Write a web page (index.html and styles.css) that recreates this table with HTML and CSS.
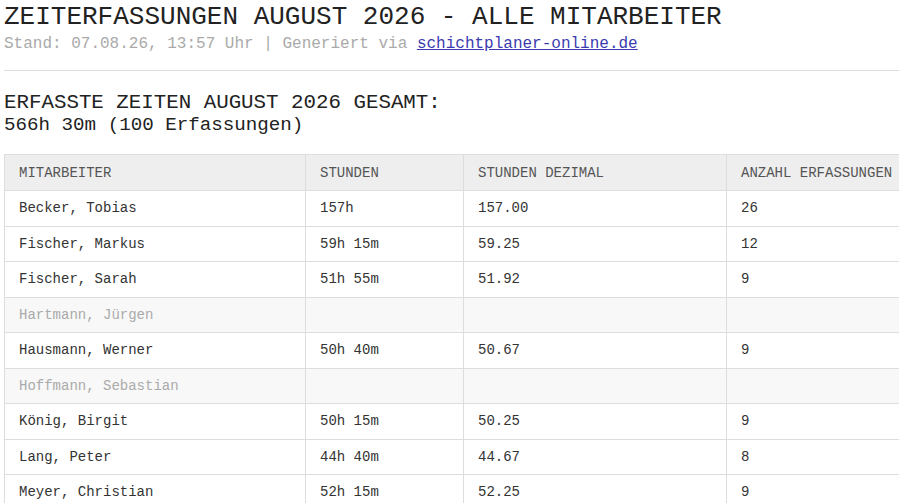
FILE: index.html
```html
<!DOCTYPE html>
<html lang="de">
<head>
<meta charset="utf-8">
<title>Zeiterfassungen August 2026</title>
<link rel="stylesheet" href="styles.css">
</head>
<body>
<header class="page-head">
  <h1 class="title">ZEITERFASSUNGEN AUGUST 2026 - ALLE MITARBEITER</h1>
  <p class="meta">Stand: 07.08.26, 13:57 Uhr | Generiert via <a href="#" class="meta-link">schichtplaner-online.de</a></p>
</header>
<hr class="divider">
<section class="summary">
  <h2 class="summary-title">ERFASSTE ZEITEN AUGUST 2026 GESAMT:</h2>
  <div class="summary-total">566h 30m (100 Erfassungen)</div>
</section>
<div class="table-wrap">
<table class="times">
  <colgroup>
    <col class="c1"><col class="c2"><col class="c3"><col class="c4">
  </colgroup>
  <thead>
    <tr><th>Mitarbeiter</th><th>Stunden</th><th>Stunden dezimal</th><th>Anzahl Erfassungen</th></tr>
  </thead>
  <tbody>
    <tr><td>Becker, Tobias</td><td>157h</td><td>157.00</td><td>26</td></tr>
    <tr><td>Fischer, Markus</td><td>59h 15m</td><td>59.25</td><td>12</td></tr>
    <tr><td>Fischer, Sarah</td><td>51h 55m</td><td>51.92</td><td>9</td></tr>
    <tr class="inactive"><td>Hartmann, Jürgen</td><td></td><td></td><td></td></tr>
    <tr><td>Hausmann, Werner</td><td>50h 40m</td><td>50.67</td><td>9</td></tr>
    <tr class="inactive"><td>Hoffmann, Sebastian</td><td></td><td></td><td></td></tr>
    <tr><td>König, Birgit</td><td>50h 15m</td><td>50.25</td><td>9</td></tr>
    <tr><td>Lang, Peter</td><td>44h 40m</td><td>44.67</td><td>8</td></tr>
    <tr><td>Meyer, Christian</td><td>52h 15m</td><td>52.25</td><td>9</td></tr>
  </tbody>
</table>
</div>
</body>
</html>
```

FILE: styles.css
```css
html, body {
  margin: 0;
  background: #fff;
}
body {
  padding: 2px 0 0 4px;
  font-family: "Liberation Mono", "Courier New", monospace;
  color: #222;
  overflow: hidden;
}
.title {
  margin: 0;
  font-size: 26px;
  line-height: 30px;
  font-weight: normal;
  color: #222;
}
.meta {
  margin: 2px 0 0;
  font-size: 16px;
  line-height: 20px;
  color: #aaa;
}
.meta-link {
  color: #3b3bb0;
}
.divider {
  margin: 16px 0 0;
  border: 0;
  border-top: 1px solid #ddd;
  height: 0;
}
.summary {
  margin-top: 20px;
}
.summary-title {
  margin: 0;
  font-size: 20.8px;
  line-height: 24px;
  font-weight: normal;
  color: #222;
}
.summary-total {
  font-size: 19.2px;
  line-height: 21px;
  color: #222;
}
.table-wrap {
  margin-top: 18px;
  width: 960px;
}
.times {
  border-collapse: collapse;
  table-layout: fixed;
  width: 940px;
  font-size: 14px;
  color: #333;
}
.c1 { width: 301px; }
.c2 { width: 158px; }
.c3 { width: 263px; }
.c4 { width: 218px; }
.times th,
.times td {
  border: 1px solid #ddd;
  padding: 0 14px;
  height: 34.5px;
  text-align: left;
  white-space: nowrap;
}
.times th {
  background: #eee;
  font-weight: normal;
  text-transform: uppercase;
  font-size: 14px;
  color: #555;
  height: 35px;
}
.times tr.inactive td {
  background: #f8f8f8;
  color: #aaa;
}
```
